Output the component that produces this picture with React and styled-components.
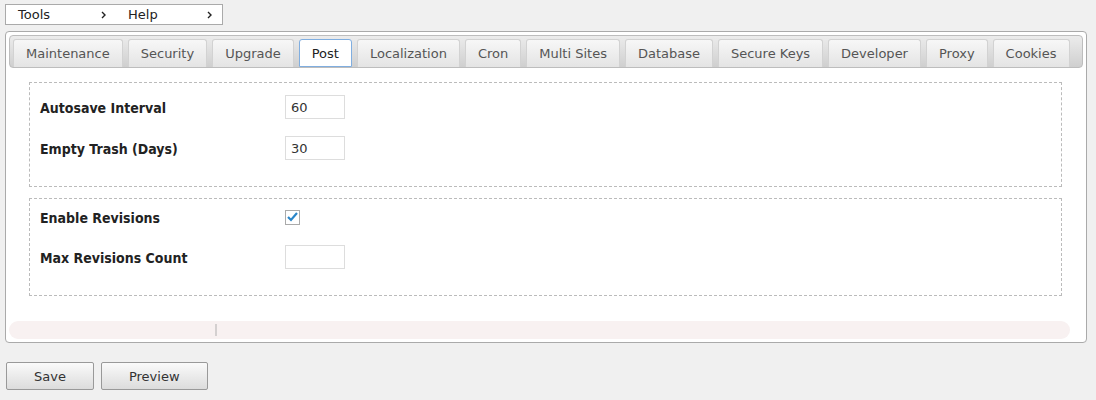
import React from 'react'
import styled, { createGlobalStyle } from 'styled-components'

const GlobalStyle = createGlobalStyle`
  html, body {
    margin: 0;
    background: #f0f0f0;
  }
  body {
    padding: 4px 5px;
    font-family: 'DejaVu Sans', Verdana, sans-serif;
    font-size: 13px;
    color: #222;
  }
`

const MenuBar = styled.div`
  display: flex;
  width: 216px;
  height: 19px;
  border: 1px solid #aaa;
  background: #fff;
`

const MenuItem = styled.div`
  display: flex;
  align-items: center;
  justify-content: space-between;
  width: ${p => p.w}px;
  box-sizing: border-box;
  padding: 0 10px 0 12px;
  line-height: 19px;
  color: #222;
`

const Chevron = () => (
  <svg width="5" height="8" viewBox="0 0 5 8">
    <polyline points="1,1 4,4 1,7" fill="none" stroke="#222" strokeWidth="1.4" />
  </svg>
)

const Panel = styled.div`
  margin-top: 6px;
  width: 1082px;
  box-sizing: border-box;
  height: 312px;
  border: 1px solid #aaa;
  border-radius: 4px;
  background: #fff;
  padding: 3px;
  display: flex;
  flex-direction: column;
`

const TabStrip = styled.div`
  display: flex;
  gap: 5px;
  padding: 3px 3px 0;
  border: 1px solid #bdbdbd;
  border-radius: 4px;
  background: linear-gradient(#ececec, #cfcfcf);
`

const Tab = styled.div`
  height: 28px;
  line-height: 27px;
  padding: 0 12px;
  box-sizing: border-box;
  border: 1px solid ${p => (p.active ? '#80aee0' : '#d2d2d2')};
  border-bottom: ${p => (p.active ? '1px solid #80aee0' : 'none')};
  border-radius: 3px 3px 0 0;
  background: ${p => (p.active ? '#fff' : 'linear-gradient(#f7f7f7, #e4e4e4)')};
  color: ${p => (p.active ? '#222' : '#555')};
  white-space: nowrap;
`

const Content = styled.div`
  display: flex;
  flex-direction: column;
  gap: 11px;
  padding: 14px 21px 24px 20px;
`

const Fieldset = styled.div`
  display: flex;
  flex-direction: column;
  gap: ${p => p.gap}px;
  border: 1px dashed #bbb;
  padding: ${p => p.top}px 10px 26px;
`

const Row = styled.div`
  display: flex;
  align-items: center;
  height: 24px;
`

const Label = styled.div`
  width: 245px;
  padding-top: 2px;
  font-family: 'DejaVu Sans Condensed', 'DejaVu Sans', sans-serif;
  font-stretch: condensed;
  font-weight: bold;
  font-size: 14px;
  color: #222;
`

const Input = styled.input`
  width: 60px;
  height: 24px;
  box-sizing: border-box;
  border: 1px solid #ddd;
  padding: 0 5px;
  font-family: 'DejaVu Sans', sans-serif;
  font-size: 13px;
  color: #333;
  outline: none;
`

const CheckBox = styled.div`
  width: 15px;
  height: 15px;
  box-sizing: border-box;
  border: 1px solid #aaa;
  background: #fff;
  display: flex;
  align-items: center;
  justify-content: center;
`

const FooterBar = styled.div`
  margin-top: auto;
  margin-right: 13px;
  height: 18px;
  border-radius: 9px;
  background: #f8f1f1;
  display: flex;
  align-items: center;
  padding-left: 206px;
`

const Divider = styled.div`
  width: 2px;
  height: 12px;
  background: #d4d0d0;
`

const Buttons = styled.div`
  display: flex;
  gap: 7px;
  margin: 19px 0 0 1px;
`

const Button = styled.button`
  height: 28px;
  padding: 0 27px;
  border: 1px solid #999;
  border-radius: 2px;
  background: linear-gradient(#fafafa, #dcdcdc);
  font-family: 'DejaVu Sans', sans-serif;
  font-size: 13px;
  color: #333;
`

const tabs = ['Maintenance', 'Security', 'Upgrade', 'Post', 'Localization', 'Cron', 'Multi Sites', 'Database', 'Secure Keys', 'Developer', 'Proxy', 'Cookies']

export default function App() {
  return (
    <>
      <GlobalStyle />
      <MenuBar>
        <MenuItem w={110}>Tools<Chevron /></MenuItem>
        <MenuItem w={106}>Help<Chevron /></MenuItem>
      </MenuBar>
      <Panel>
        <TabStrip>
          {tabs.map(t => (
            <Tab key={t} active={t === 'Post'}>{t}</Tab>
          ))}
        </TabStrip>
        <Content>
          <Fieldset top={12} gap={17}>
            <Row>
              <Label>Autosave Interval</Label>
              <Input defaultValue="60" />
            </Row>
            <Row>
              <Label>Empty Trash (Days)</Label>
              <Input defaultValue="30" />
            </Row>
          </Fieldset>
          <Fieldset top={6} gap={16}>
            <Row>
              <Label>Enable Revisions</Label>
              <CheckBox>
                <svg width="11" height="10" viewBox="0 0 11 10">
                  <polyline points="1,5 4,8 10,1" fill="none" stroke="#2a86c9" strokeWidth="2.2" />
                </svg>
              </CheckBox>
            </Row>
            <Row>
              <Label>Max Revisions Count</Label>
              <Input />
            </Row>
          </Fieldset>
        </Content>
        <FooterBar>
          <Divider />
        </FooterBar>
      </Panel>
      <Buttons>
        <Button>Save</Button>
        <Button>Preview</Button>
      </Buttons>
    </>
  )
}
